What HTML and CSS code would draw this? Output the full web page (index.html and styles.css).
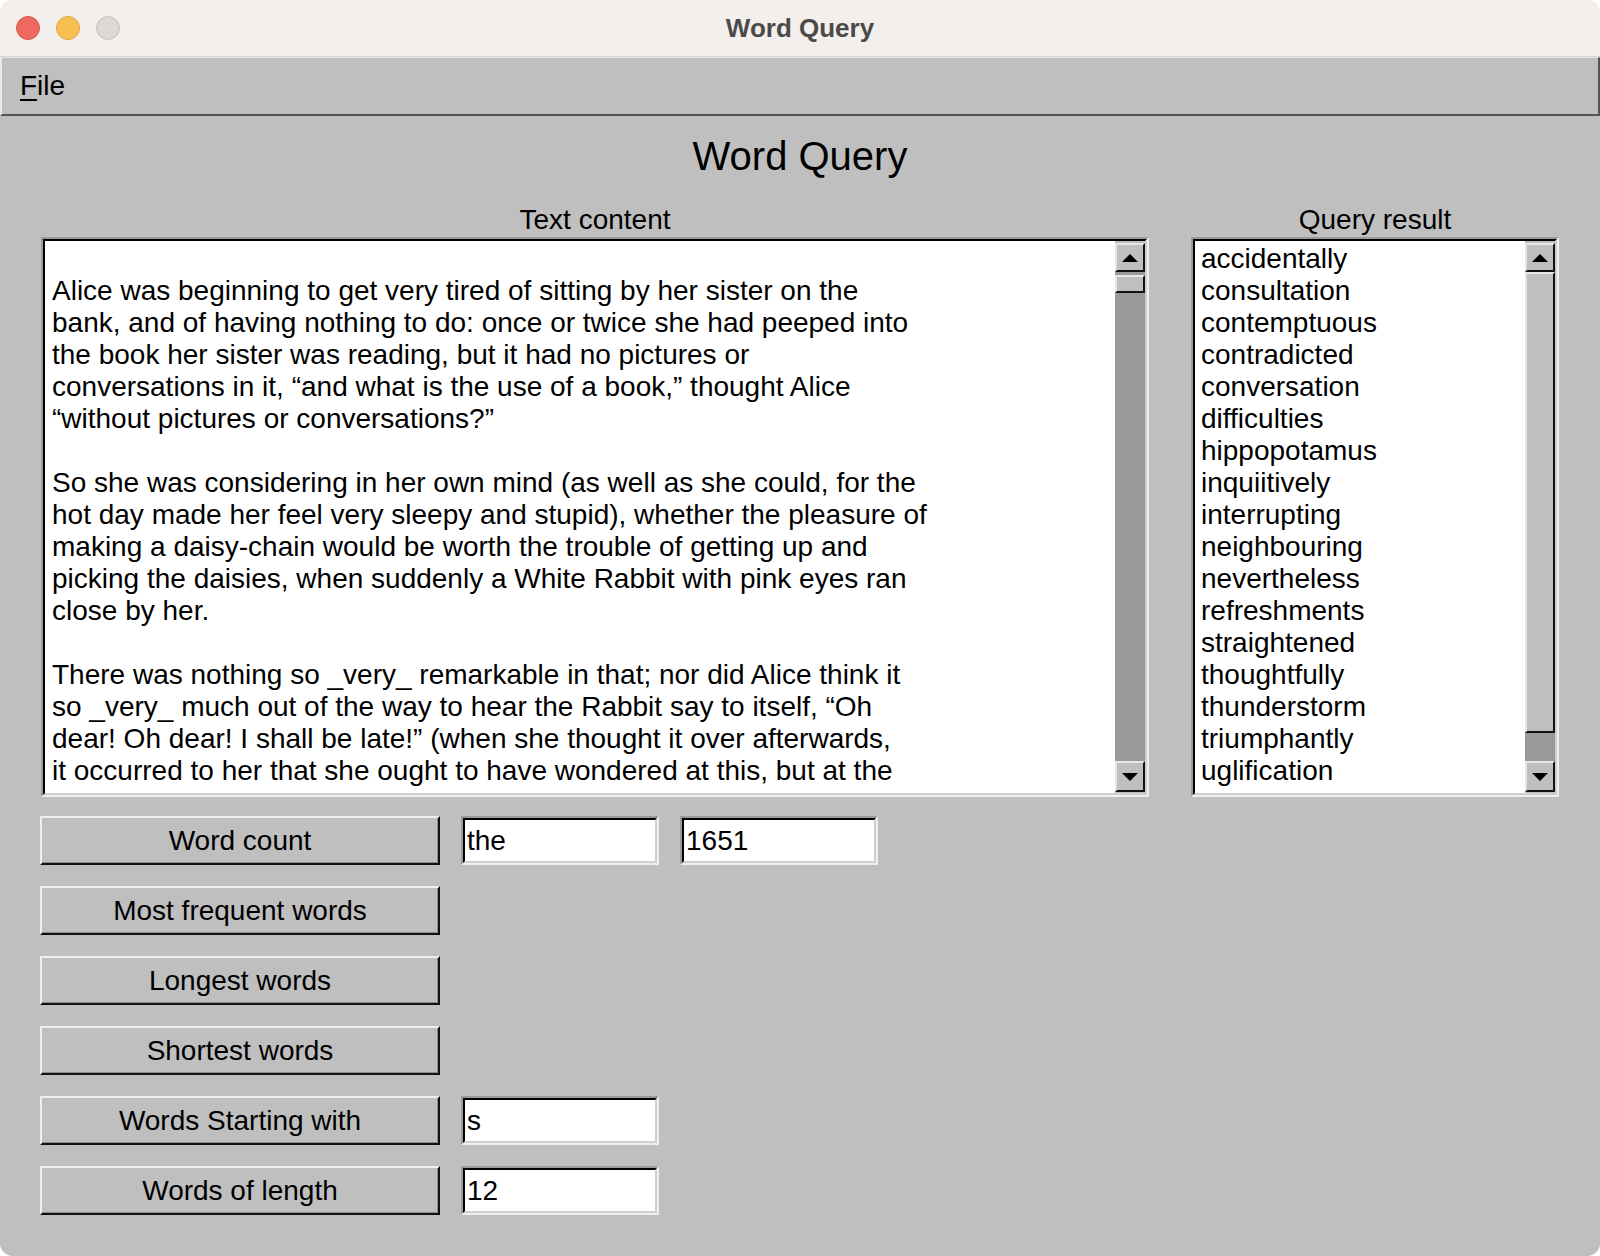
FILE: index.html
```html
<!DOCTYPE html>
<html>
<head>
<meta charset="utf-8">
<title>Word Query</title>
<link rel="stylesheet" href="styles.css">
</head>
<body>
<div class="window">
  <div class="titlebar">
    <div class="lights">
      <span class="light red"></span>
      <span class="light yellow"></span>
      <span class="light gray"></span>
    </div>
    <div class="title">Word Query</div>
    <div class="spacer"></div>
  </div>
  <div class="menubar"><span class="menu"><span class="mnemonic">F</span>ile</span></div>
  <div class="main">
    <h1 class="heading">Word Query</h1>
    <div class="panes">
      <div class="pane">
        <div class="pane-label">Text content</div>
        <div class="sunken box">
          <div class="sunken-inner box-inner">
            <div class="text">
              <div class="line"></div>
              <div class="line">Alice was beginning to get very tired of sitting by her sister on the</div>
              <div class="line">bank, and of having nothing to do: once or twice she had peeped into</div>
              <div class="line">the book her sister was reading, but it had no pictures or</div>
              <div class="line">conversations in it, “and what is the use of a book,” thought Alice</div>
              <div class="line">“without pictures or conversations?”</div>
              <div class="line"></div>
              <div class="line">So she was considering in her own mind (as well as she could, for the</div>
              <div class="line">hot day made her feel very sleepy and stupid), whether the pleasure of</div>
              <div class="line">making a daisy-chain would be worth the trouble of getting up and</div>
              <div class="line">picking the daisies, when suddenly a White Rabbit with pink eyes ran</div>
              <div class="line">close by her.</div>
              <div class="line"></div>
              <div class="line">There was nothing so _very_ remarkable in that; nor did Alice think it</div>
              <div class="line">so _very_ much out of the way to hear the Rabbit say to itself, “Oh</div>
              <div class="line">dear! Oh dear! I shall be late!” (when she thought it over afterwards,</div>
              <div class="line">it occurred to her that she ought to have wondered at this, but at the</div>
            </div>
            <div class="scrollbar">
              <div class="sb-btn"><span class="arrow-up"></span></div>
              <div class="trough">
                <div class="thumb thumb-text"></div>
              </div>
              <div class="sb-btn sb-down"><span class="arrow-down"></span></div>
            </div>
          </div>
        </div>
      </div>
      <div class="pane">
        <div class="pane-label">Query result</div>
        <div class="sunken box">
          <div class="sunken-inner box-inner">
            <div class="list">
              <div class="line">accidentally</div>
              <div class="line">consultation</div>
              <div class="line">contemptuous</div>
              <div class="line">contradicted</div>
              <div class="line">conversation</div>
              <div class="line">difficulties</div>
              <div class="line">hippopotamus</div>
              <div class="line">inquiitively</div>
              <div class="line">interrupting</div>
              <div class="line">neighbouring</div>
              <div class="line">nevertheless</div>
              <div class="line">refreshments</div>
              <div class="line">straightened</div>
              <div class="line">thoughtfully</div>
              <div class="line">thunderstorm</div>
              <div class="line">triumphantly</div>
              <div class="line">uglification</div>
            </div>
            <div class="scrollbar">
              <div class="sb-btn"><span class="arrow-up"></span></div>
              <div class="trough trough-list">
                <div class="thumb thumb-list"></div>
              </div>
              <div class="sb-btn sb-down"><span class="arrow-down"></span></div>
            </div>
          </div>
        </div>
      </div>
    </div>
    <div class="controls">
      <div class="row">
        <div class="btn">Word count</div>
        <div class="sunken entry"><div class="sunken-inner entry-inner">the</div></div>
        <div class="sunken entry"><div class="sunken-inner entry-inner">1651</div></div>
      </div>
      <div class="row">
        <div class="btn">Most frequent words</div>
      </div>
      <div class="row">
        <div class="btn">Longest words</div>
      </div>
      <div class="row">
        <div class="btn">Shortest words</div>
      </div>
      <div class="row">
        <div class="btn">Words Starting with</div>
        <div class="sunken entry"><div class="sunken-inner entry-inner">s</div></div>
      </div>
      <div class="row">
        <div class="btn">Words of length</div>
        <div class="sunken entry"><div class="sunken-inner entry-inner">12</div></div>
      </div>
    </div>
  </div>
</div>
</body>
</html>
```

FILE: styles.css
```css
* { box-sizing: border-box; }
html, body {
  margin: 0;
  padding: 0;
  background: #ffffff;
}
body {
  font-family: "Liberation Sans", Arial, sans-serif;
  color: #000;
}
.window {
  width: 1600px;
  height: 1256px;
  border-radius: 13px;
  overflow: hidden;
  background: #bfbfbf;
  display: flex;
  flex-direction: column;
}
.titlebar {
  height: 57px;
  flex: none;
  background: #f3efed;
  border-bottom: 1px solid #d7d4d2;
  display: grid;
  grid-template-columns: 1fr auto 1fr;
  align-items: center;
}
.lights {
  display: flex;
  gap: 16px;
  padding-left: 16px;
}
.light {
  width: 24px;
  height: 24px;
  border-radius: 50%;
  display: block;
}
.red { background: #ee6a5e; border: 1px solid #d85b50; }
.yellow { background: #f6bf50; border: 1px solid #dba63d; }
.gray { background: #dcd8d6; border: 1px solid #c6c2c0; }
.title {
  font-family: "Liberation Sans", Arial, sans-serif;
  font-weight: bold;
  font-size: 26px;
  color: #4c4a49;
}
.menubar {
  height: 59px;
  flex: none;
  background: #bfbfbf;
  border-top: 1px solid #e4e4e4;
  border-left: 2px solid #eaeaea;
  border-right: 2px solid #555;
  border-bottom: 2px solid #555;
  display: flex;
  align-items: center;
  padding-left: 18px;
}
.menu {
  font-size: 28px;
  line-height: 32px;
}
.mnemonic {
  text-decoration: underline;
  text-underline-offset: 4px;
  text-decoration-thickness: 2px;
}
.main {
  flex: 1;
  padding: 16px 41px 0 41px;
}
.heading {
  margin: 0;
  font-weight: normal;
  font-size: 40px;
  line-height: 48px;
  text-align: center;
}
.panes {
  margin-top: 24px;
  display: grid;
  grid-template-columns: 1108px 368px;
  column-gap: 42px;
}
.pane-label {
  font-size: 28px;
  line-height: 32px;
  text-align: center;
  margin-bottom: 1px;
}
.sunken {
  border: 2px solid;
  border-color: #9a9a9a #efefef #efefef #9a9a9a;
}
.sunken-inner {
  border: 2px solid;
  border-color: #000 #cfcfcf #cfcfcf #000;
  background: #fff;
}
.box {
  height: 560px;
}
.box-inner {
  height: 100%;
  display: flex;
}
.text, .list {
  flex: 1;
  min-width: 0;
  overflow: hidden;
  padding-top: 2px;
  font-size: 28px;
  line-height: 32px;
}
.text { padding-left: 7px; }
.list { padding-left: 6px; }
.line {
  height: 32px;
  white-space: pre;
}
.scrollbar {
  width: 30px;
  flex: none;
  display: flex;
  flex-direction: column;
  background: #bfbfbf;
  padding: 2px 0 1px 0;
}
.sb-btn {
  height: 29px;
  flex: none;
  background: #bfbfbf;
  border: 2px solid;
  border-color: #e6e6e6 #111 #111 #e6e6e6;
  display: flex;
  align-items: center;
  justify-content: center;
}
.sb-down { height: 31px; }
.arrow-up {
  width: 0;
  height: 0;
  border-left: 8px solid transparent;
  border-right: 8px solid transparent;
  border-bottom: 8px solid #000;
}
.arrow-down {
  width: 0;
  height: 0;
  border-left: 8px solid transparent;
  border-right: 8px solid transparent;
  border-top: 8px solid #000;
}
.trough {
  flex: 1;
  background: #999;
  padding-top: 3px;
}
.trough-list { padding-top: 0; }
.thumb {
  background: #bfbfbf;
  border: 2px solid;
  border-color: #e6e6e6 #111 #111 #e6e6e6;
}
.thumb-text { height: 18px; }
.thumb-list { height: 461px; }
.controls {
  margin-top: 19px;
  display: flex;
  flex-direction: column;
  gap: 21px;
}
.row {
  display: flex;
  gap: 21px;
  height: 49px;
}
.btn {
  width: 400px;
  margin-left: -1px;
  height: 49px;
  background: #bfbfbf;
  border: 2px solid;
  border-color: #efefef #111 #111 #efefef;
  box-shadow: inset -1px -1px 0 #8c8c8c;
  font-size: 28px;
  line-height: 45px;
  text-align: center;
}
.entry {
  width: 198px;
  height: 49px;
}
.entry-inner {
  height: 100%;
  font-size: 28px;
  line-height: 41px;
  padding-left: 2px;
}
```
